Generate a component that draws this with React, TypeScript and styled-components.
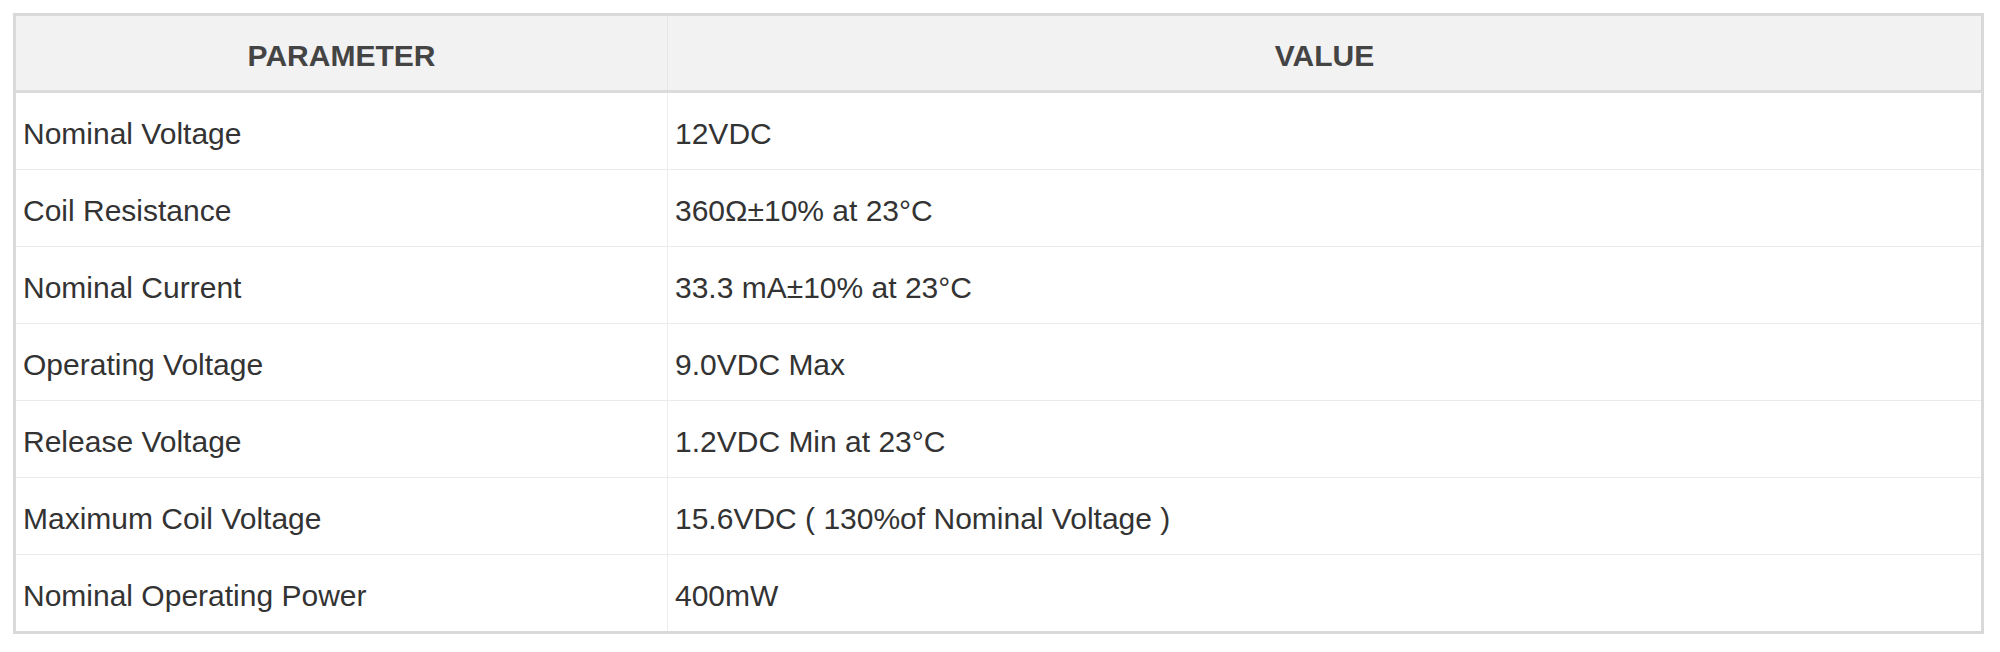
import styled, { createGlobalStyle } from 'styled-components';

const GlobalStyle = createGlobalStyle`
  html, body {
    margin: 0;
    padding: 0;
    background: #fff;
  }
  body {
    font-family: "Liberation Sans", Arial, sans-serif;
  }
`;

type SpecRow = {
  parameter: string;
  value: string;
};

const specs: SpecRow[] = [
  { parameter: 'Nominal Voltage', value: '12VDC' },
  { parameter: 'Coil Resistance', value: '360Ω±10% at 23°C' },
  { parameter: 'Nominal Current', value: '33.3 mA±10% at 23°C' },
  { parameter: 'Operating Voltage', value: '9.0VDC Max' },
  { parameter: 'Release Voltage', value: '1.2VDC Min at 23°C' },
  { parameter: 'Maximum Coil Voltage', value: '15.6VDC ( 130%of Nominal Voltage )' },
  { parameter: 'Nominal Operating Power', value: '400mW' },
];

const Page = styled.div`
  padding: 13px 16px 0 13px;
`;

const Table = styled.div`
  box-sizing: border-box;
  width: 1971px;
  border: 3px solid #d9d9d9;
  display: flex;
  flex-direction: column;
`;

const HeadRow = styled.div`
  display: grid;
  grid-template-columns: 651px 1fr;
  height: 74px;
  background: #f2f2f2;
  border-bottom: 3px solid #dbdbdb;
`;

const HeadCell = styled.div<{ divided?: boolean }>`
  display: flex;
  align-items: center;
  justify-content: center;
  padding-top: 5px;
  box-sizing: border-box;
  border-left: ${p => (p.divided ? '1px solid #e6e6e6' : 'none')};
  font-size: 30px;
  font-weight: 700;
  color: #444;
  text-transform: uppercase;
`;

const Row = styled.div<{ first?: boolean }>`
  display: grid;
  grid-template-columns: 651px 1fr;
  height: 76px;
  border-top: ${p => (p.first ? 'none' : '1px solid #ebebeb')};
`;

const Cell = styled.div<{ divided?: boolean }>`
  display: flex;
  align-items: center;
  box-sizing: border-box;
  padding: 5px 8px 0 7px;
  border-left: ${p => (p.divided ? '1px solid #ededed' : 'none')};
  font-size: 30px;
  color: #333;
  white-space: nowrap;
`;

export default function App() {
  return (
    <Page>
      <GlobalStyle />
      <Table>
        <HeadRow>
          <HeadCell>Parameter</HeadCell>
          <HeadCell divided>Value</HeadCell>
        </HeadRow>
        {specs.map((row, i) => (
          <Row key={row.parameter} first={i === 0}>
            <Cell>{row.parameter}</Cell>
            <Cell divided>{row.value}</Cell>
          </Row>
        ))}
      </Table>
    </Page>
  );
}
